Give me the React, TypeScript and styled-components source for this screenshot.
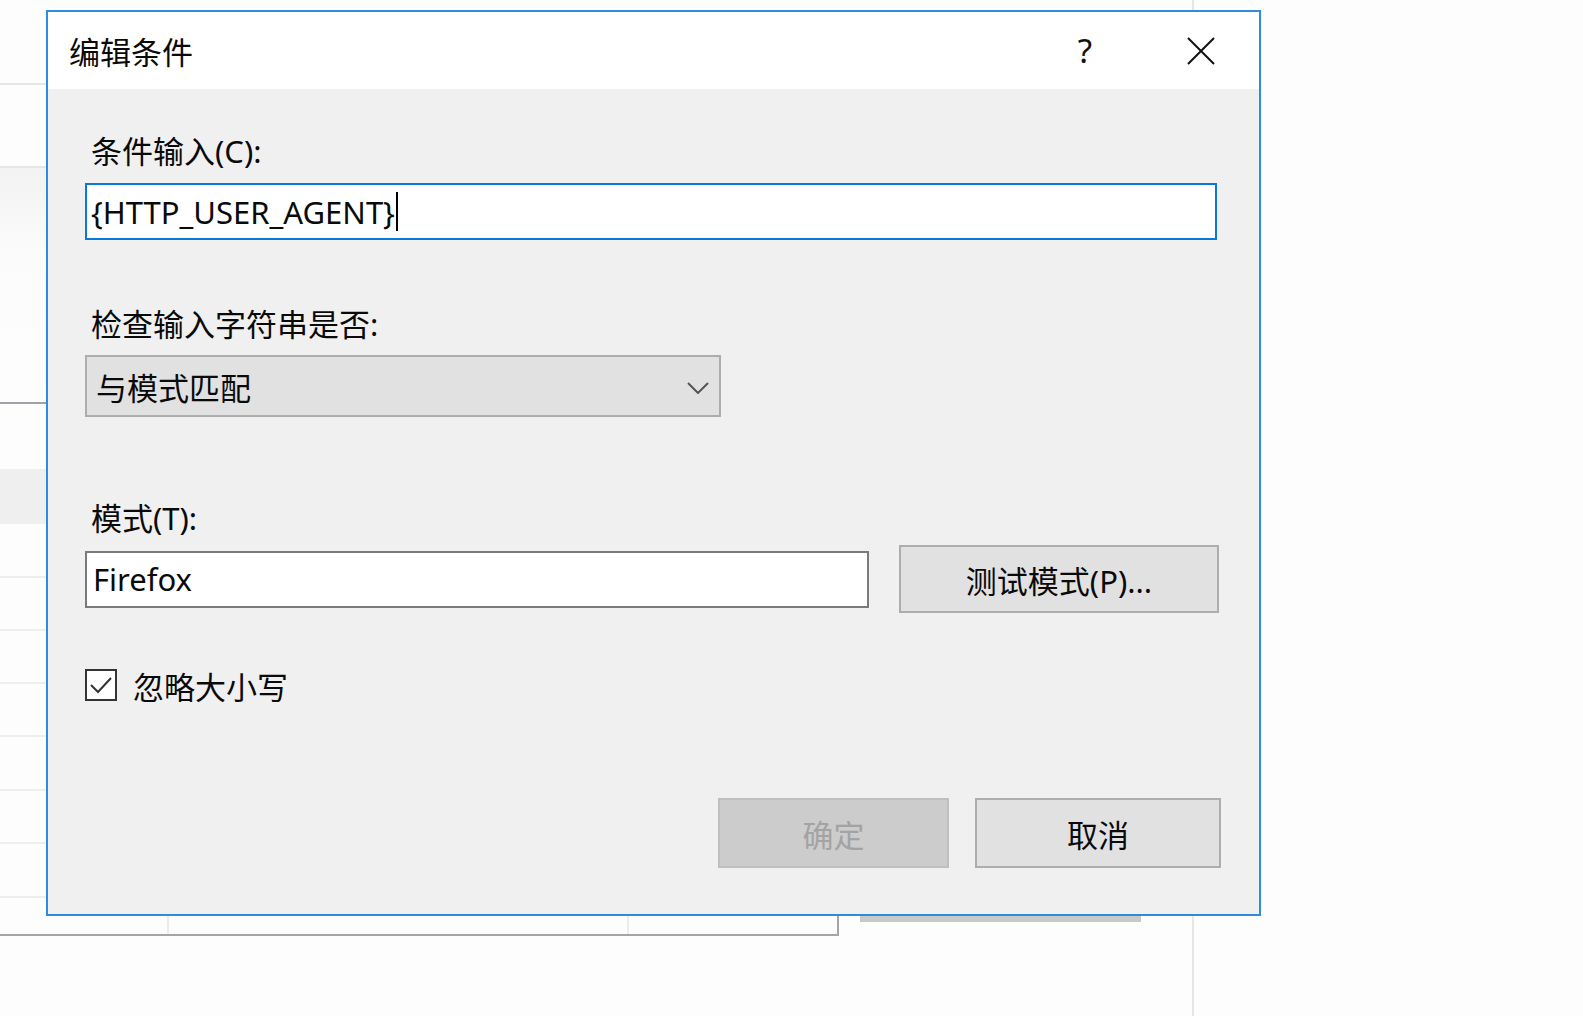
import React from "react";
import styled, { createGlobalStyle } from "styled-components";

const Global = createGlobalStyle`
  html, body { margin: 0; padding: 0; background: #fdfdfd; }
  body { font-family: "Noto Sans", "Noto Sans CJK SC", sans-serif; }
  #root { width: 1583px; height: 1016px; }
`;

const Desktop = styled.div`
  position: relative;
  width: 1583px;
  height: 1016px;
  overflow: hidden;
  background: #fdfdfd;
  display: flex;
  align-items: flex-start;
`;

const ListPanel = styled.div`
  width: 839px;
  height: 936px;
  box-sizing: border-box;
  border-bottom: 2px solid #a2a5aa;
  display: flex;
  flex-direction: column;
  flex: none;
`;

const ListRow = styled.div<{ $h: number; $line?: string; $bg?: string }>`
  flex: none;
  height: ${(p) => p.$h}px;
  box-sizing: border-box;
  border-bottom: 2px solid ${(p) => p.$line ?? "transparent"};
  background: ${(p) => p.$bg ?? "transparent"};
`;

const LastRow = styled.div`
  flex: 1;
  display: grid;
  grid-template-columns: 169px 460px 1fr;
  border-right: 2px solid #a2a5aa;
`;

const Cell = styled.div`
  border-right: 2px solid #ececec;
  &:last-child { border-right: none; }
`;

const MidColumn = styled.div`
  flex: none;
  margin-left: 21px;
  width: 281px;
  padding-top: 916px;
`;

const PeekBar = styled.div`
  height: 6px;
  background: #c9c9c9;
`;

const VRule = styled.div`
  flex: none;
  margin-left: 51px;
  width: 2px;
  height: 1016px;
  background: #e6e6e6;
`;

const Dialog = styled.div`
  position: absolute;
  left: 46px;
  top: 10px;
  width: 1215px;
  height: 906px;
  box-sizing: border-box;
  border: 2px solid #2f8be0;
  background: #f0f0f0;
  display: flex;
  flex-direction: column;
`;

const TitleBar = styled.div`
  flex: none;
  height: 77px;
  background: #ffffff;
  display: flex;
  align-items: center;
`;

const Title = styled.div`
  flex: 1;
  padding-left: 21px;
  font-size: 31px;
  color: #0a0a0a;
`;

const Caption = styled.div`
  width: 116px;
  height: 77px;
  display: flex;
  align-items: center;
  justify-content: center;
  font-size: 33px;
  color: #111;
`;

const Body = styled.div`
  flex: 1;
  display: flex;
  flex-direction: column;
  padding: 0 38px 0 37px;
`;

const Label = styled.div<{ $mt: number }>`
  margin-top: ${(p) => p.$mt}px;
  height: 40px;
  line-height: 40px;
  padding-left: 6px;
  font-size: 31px;
  color: #0a0a0a;
`;

const Field = styled.div<{ $w: number; $focused?: boolean; $mt?: number }>`
  margin-top: ${(p) => p.$mt ?? 0}px;
  width: ${(p) => p.$w}px;
  height: 57px;
  box-sizing: border-box;
  border: 2px solid ${(p) => (p.$focused ? "#0a78d8" : "#7a7a7a")};
  background: #fff;
  display: flex;
  align-items: center;
  padding-left: ${(p) => (p.$focused ? 4 : 6)}px;
  font-size: 31px;
  color: #0a0a0a;
  flex: none;
`;

const Caret = styled.span`
  display: inline-block;
  width: 2px;
  height: 39px;
  background: #000;
  margin-left: 1px;
`;

const Select = styled.div`
  margin-top: 11px;
  width: 636px;
  height: 62px;
  box-sizing: border-box;
  border: 2px solid #adadad;
  background: #e1e1e1;
  display: flex;
  align-items: center;
  justify-content: space-between;
  padding: 0 10px 0 9px;
  font-size: 31px;
  color: #0a0a0a;
`;

const Chevron = styled.svg`
  margin-top: 4px;
`;

const PatternRow = styled.div`
  margin-top: 7px;
  height: 68px;
  display: flex;
  align-items: center;
  gap: 30px;
`;

const Button = styled.div<{ $w: number; $h: number; $disabled?: boolean }>`
  width: ${(p) => p.$w}px;
  height: ${(p) => p.$h}px;
  box-sizing: border-box;
  border: 2px solid ${(p) => (p.$disabled ? "#bfbfbf" : "#adadad")};
  background: ${(p) => (p.$disabled ? "#cccccc" : "#e1e1e1")};
  color: ${(p) => (p.$disabled ? "#a3a3a3" : "#0a0a0a")};
  display: flex;
  align-items: center;
  justify-content: center;
  font-size: 31px;
  flex: none;
`;

const CheckRow = styled.div`
  margin-top: 52px;
  height: 40px;
  display: flex;
  align-items: center;
  gap: 16px;
  font-size: 31px;
  color: #0a0a0a;
`;

const CheckBox = styled.div`
  width: 32px;
  height: 32px;
  box-sizing: border-box;
  border: 2px solid #333;
  background: #fff;
  display: flex;
  align-items: center;
  justify-content: center;
`;

const Footer = styled.div`
  margin-top: 93px;
  display: flex;
  justify-content: flex-end;
  gap: 26px;
`;

export default function App() {
  return (
    <>
      <Global />
      <Desktop>
        <ListPanel>
          <ListRow $h={85} $line="#e6e6e6" />
          <ListRow $h={83} $line="#e6e6e6" />
          <ListRow
            $h={236}
            $line="#9ea2a7"
            $bg="linear-gradient(#f2f2f2 0px, #fbfbfb 80px, #fdfdfd 100%)"
          />
          <ListRow $h={65} />
          <ListRow $h={55} $bg="#efefef" />
          {[54, 53, 53, 53, 54, 53, 54].map((h, i) => (
            <ListRow key={i} $h={h} $line="#eeeeee" />
          ))}
          <LastRow>
            <Cell />
            <Cell />
            <Cell />
          </LastRow>
        </ListPanel>
        <MidColumn>
          <PeekBar />
        </MidColumn>
        <VRule />

        <Dialog>
          <TitleBar>
            <Title>编辑条件</Title>
            <Caption>?</Caption>
            <Caption>
              <svg width="28" height="28" viewBox="0 0 28 28">
                <path d="M1 1 L27 27 M27 1 L1 27" stroke="#111" strokeWidth="2" fill="none" />
              </svg>
            </Caption>
          </TitleBar>
          <Body>
            <Label $mt={42}>条件输入(C):</Label>
            <Field $w={1132} $focused $mt={12}>
              <span>{"{HTTP_USER_AGENT}"}</span>
              <Caret />
            </Field>
            <Label $mt={64}>检查输入字符串是否:</Label>
            <Select>
              <span>与模式匹配</span>
              <Chevron width="22" height="12" viewBox="0 0 22 12">
                <path d="M1 1 L11 11 L21 1" stroke="#555" strokeWidth="2" fill="none" />
              </Chevron>
            </Select>
            <Label $mt={81}>模式(T):</Label>
            <PatternRow>
              <Field $w={784}>Firefox</Field>
              <Button $w={320} $h={68}>测试模式(P)...</Button>
            </PatternRow>
            <CheckRow>
              <CheckBox>
                <svg width="24" height="20" viewBox="0 0 24 20">
                  <path d="M2 10 L9 17 L22 3" stroke="#333" strokeWidth="2" fill="none" />
                </svg>
              </CheckBox>
              <span>忽略大小写</span>
            </CheckRow>
            <Footer>
              <Button $w={231} $h={70} $disabled>确定</Button>
              <Button $w={246} $h={70}>取消</Button>
            </Footer>
          </Body>
        </Dialog>
      </Desktop>
    </>
  );
}
